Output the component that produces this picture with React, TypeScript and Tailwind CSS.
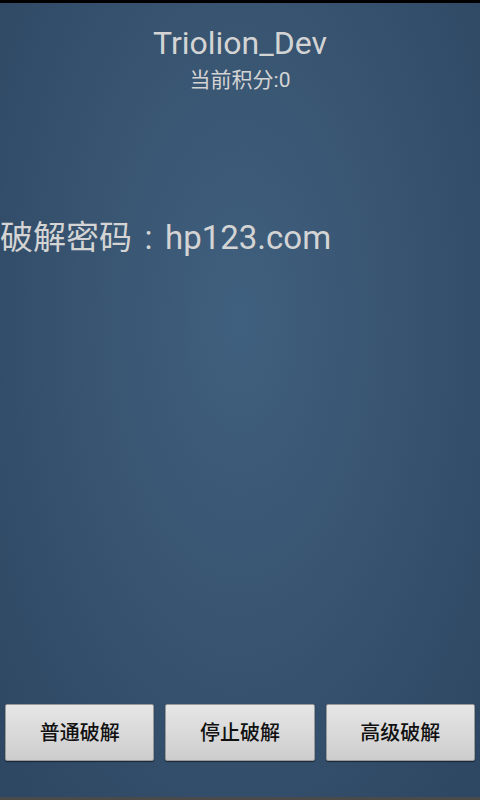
export default function App() {
  return (
    <div className="w-[480px] h-[800px] flex flex-col bg-black overflow-hidden" style={{ fontFamily: 'Roboto, "Noto Sans CJK SC", sans-serif' }}>
      <div className="h-[3px] bg-black" />
      <div className="flex-1 flex flex-col bg-[radial-gradient(ellipse_at_50%_40%,#40607f_0%,#37536f_50%,#2d4662_100%)]">
        <div className="flex flex-col items-center pt-[20px]">
          <div className="text-[32px] leading-[40px] text-[#d4d4d4]">Triolion_Dev</div>
          <div className="text-[21px] leading-[26px] text-[#d4d4d4] mt-[4px]">当前积分:0</div>
        </div>
        <div className="mt-[123px] text-[33px] leading-[44px] text-[#d4d4d4] whitespace-nowrap">
          破解密码<span className="inline-block w-[1em] text-center">:</span>hp123.com
        </div>
        <div className="flex-1" />
        <div className="flex gap-[11px] px-[5px] mb-[36px]">
          {['普通破解', '停止破解', '高级破解'].map((t) => (
            <div key={t} className="flex-1 h-[57px] flex items-center justify-center text-[20px] font-medium text-[#111] rounded-[2px] border border-[#9a9a9a] bg-[linear-gradient(#e6e6e6,#cdcdcd)] shadow-[0_1px_1px_rgba(0,0,0,0.5)]">
              {t}
            </div>
          ))}
        </div>
      </div>
      <div className="h-[3px] bg-[#4a4a4a]" />
    </div>
  );
}
